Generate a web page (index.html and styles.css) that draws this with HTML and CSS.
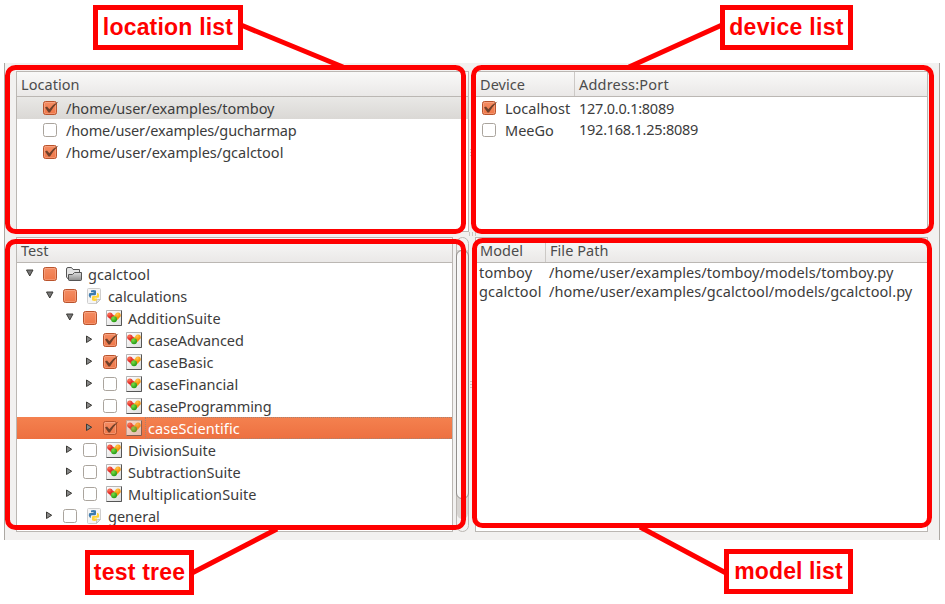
FILE: index.html
```
<!DOCTYPE html>
<html lang="en">
<head>
<meta charset="utf-8">
<title>Test runner</title>
<link rel="stylesheet" href="styles.css">
</head>
<body>
<svg class="defs" width="0" height="0">
  <defs>
    <linearGradient id="orange" x1="0" y1="0" x2="0" y2="1"><stop offset="0" stop-color="#f58d63"/><stop offset="1" stop-color="#ef7748"/></linearGradient>
    <linearGradient id="grey" x1="0" y1="0" x2="0" y2="1"><stop offset="0" stop-color="#dcdcdc"/><stop offset="1" stop-color="#8c8c8c"/></linearGradient>
    <linearGradient id="tile" x1="0" y1="0" x2="1" y2="1"><stop offset="0" stop-color="#fff"/><stop offset="1" stop-color="#dcdcdc"/></linearGradient>
    <radialGradient id="red" cx=".35" cy=".3" r=".7"><stop offset="0" stop-color="#ff7a5c"/><stop offset="1" stop-color="#dc1c1c"/></radialGradient>
    <radialGradient id="amber" cx=".35" cy=".3" r=".7"><stop offset="0" stop-color="#ffc84a"/><stop offset="1" stop-color="#f58c00"/></radialGradient>
    <radialGradient id="green" cx=".35" cy=".3" r=".7"><stop offset="0" stop-color="#7be04a"/><stop offset="1" stop-color="#239a12"/></radialGradient>
    <symbol id="off" viewBox="0 0 16 16"><rect x=".5" y="1.5" width="13" height="13" rx="2" fill="#fff" stroke="#aaa49d"/></symbol>
    <symbol id="mixed" viewBox="0 0 16 16"><rect x=".5" y="1.5" width="13" height="13" rx="2" fill="url(#orange)" stroke="#b9532c"/><rect x="1.5" y="2.5" width="11" height="11" rx="1" fill="none" stroke="#fff" stroke-opacity=".2"/></symbol>
    <symbol id="on" viewBox="0 0 16 16"><rect x=".5" y="1.5" width="13" height="13" rx="2" fill="url(#orange)" stroke="#b9532c"/><rect x="1.5" y="2.5" width="11" height="11" rx="1" fill="none" stroke="#fff" stroke-opacity=".2"/><path d="M2 7.500 4 6.500 6.300 9.300Q9.500 4.500 15.500 1.500 10.500 6.500 7 12.500H5.500Z" fill="#70402a"/></symbol>
    <symbol id="open" viewBox="0 0 10 10"><path d="M1.500 2H8L4.750 8Z" fill="#777" stroke="#3c3b37"/></symbol>
    <symbol id="shut" viewBox="0 0 10 10"><path d="M1.500 2V8.500L6.700 5.250Z" fill="#888" stroke="#3c3b37"/></symbol>
    <symbol id="folder" viewBox="0 0 16 16"><path d="M.5 11V3Q.5 1.500 2 1.500H5.500L7 3.500H13.500V6L15 14H3Z" fill="#e4e4e4" stroke="#555"/><path d="M3.500 14.500Q2.500 14.500 2.500 13.500V8.500H6.500L8.500 6.500H15.500V13.500Q15.500 14.500 14.500 14.500Z" fill="url(#grey)" stroke="#555"/></symbol>
    <symbol id="py" viewBox="0 0 16 16"><path d="M1.500 1.500Q1.500.5 2.500.5H13.500Q14.500.5 14.500 1.500V11L10.500 15.500H2.500Q1.500 15.500 1.500 14.500Z" fill="#f5f5f5" stroke="#cfcfcf"/><path d="M10.500 15.500V12.500Q10.500 11.500 11.500 11.500H14.500Z" fill="#e2e2e2" stroke="#c4c4c4"/><path d="M5 2.500Q7.500 1.300 10 2.500V6Q10 7.200 8.800 7.200H6Q4.800 7.200 4.800 8.400V9.700H4Q1.800 7.500 3.500 5H7.500V4.300H5Z" fill="#3d7bae"/><path d="M11 5H12Q14 7 12.500 9.800H8.500V10.400H11V12.300Q8.500 13.700 6 12.300V9.200Q6 8 7.200 8H9.800Q11 8 11 6.800Z" fill="#ffd43b"/></symbol>
    <symbol id="suite" viewBox="0 0 16 16"><path d="M.5.5H15.500V15.500H.5Z" fill="url(#tile)" stroke="#b5b5b5"/><path d="M.5 15.500H15.500V.5" fill="none" stroke="#555"/><circle cx="6" cy="7.300" r="2.700" fill="url(#red)"/><circle cx="10.200" cy="7.300" r="2.700" fill="url(#amber)"/><circle cx="3.900" cy="5.200" r="2.700" fill="url(#red)"/><circle cx="12" cy="5.200" r="2.700" fill="url(#amber)"/><circle cx="8" cy="9.300" r="3" fill="url(#green)"/></symbol>
  </defs>
</svg>

<main class="window">
  <section class="panel">
    <header class="head"><span class="th">Location</span></header>
    <div class="row loc-row current"><svg class="check"><use href="#on"/></svg><span class="path">/home/user/examples/tomboy</span></div>
    <div class="row loc-row"><svg class="check"><use href="#off"/></svg><span class="path tight">/home/user/examples/gucharmap</span></div>
    <div class="row loc-row"><svg class="check"><use href="#on"/></svg><span class="path">/home/user/examples/gcalctool</span></div>
  </section>

  <section class="panel">
    <header class="head"><span class="th device">Device</span><span class="th port">Address:Port</span></header>
    <div class="row dev-row"><svg class="check"><use href="#on"/></svg><span class="name">Localhost</span><span class="addr">127.0.0.1:8089</span></div>
    <div class="row dev-row second"><svg class="check"><use href="#off"/></svg><span class="name">MeeGo</span><span class="addr">192.168.1.25:8089</span></div>
  </section>

  <div class="scroller">
    <section class="panel tree">
      <header class="head"><span class="th">Test</span></header>
      <div class="row l0"><svg class="arrow"><use href="#open"/></svg><svg class="check"><use href="#mixed"/></svg><svg class="icon"><use href="#folder"/></svg><span class="loose">gcalctool</span></div>
      <div class="row l1"><svg class="arrow"><use href="#open"/></svg><svg class="check"><use href="#mixed"/></svg><svg class="icon"><use href="#py"/></svg><span class="tight">calculations</span></div>
      <div class="row l2"><svg class="arrow"><use href="#open"/></svg><svg class="check"><use href="#mixed"/></svg><svg class="icon"><use href="#suite"/></svg><span class="loose">AdditionSuite</span></div>
      <div class="row l3"><svg class="arrow"><use href="#shut"/></svg><svg class="check"><use href="#on"/></svg><svg class="icon"><use href="#suite"/></svg><span class="tight">caseAdvanced</span></div>
      <div class="row l3"><svg class="arrow"><use href="#shut"/></svg><svg class="check"><use href="#on"/></svg><svg class="icon"><use href="#suite"/></svg><span>caseBasic</span></div>
      <div class="row l3"><svg class="arrow"><use href="#shut"/></svg><svg class="check"><use href="#off"/></svg><svg class="icon"><use href="#suite"/></svg><span>caseFinancial</span></div>
      <div class="row l3"><svg class="arrow"><use href="#shut"/></svg><svg class="check"><use href="#off"/></svg><svg class="icon"><use href="#suite"/></svg><span class="tight">caseProgramming</span></div>
      <div class="row l3 selected"><svg class="arrow"><use href="#shut"/></svg><svg class="check"><use href="#on"/></svg><svg class="icon"><use href="#suite"/></svg><span class="loose focus">caseScientific</span></div>
      <div class="row l2"><svg class="arrow"><use href="#shut"/></svg><svg class="check"><use href="#off"/></svg><svg class="icon"><use href="#suite"/></svg><span>DivisionSuite</span></div>
      <div class="row l2"><svg class="arrow"><use href="#shut"/></svg><svg class="check"><use href="#off"/></svg><svg class="icon"><use href="#suite"/></svg><span>SubtractionSuite</span></div>
      <div class="row l2"><svg class="arrow"><use href="#shut"/></svg><svg class="check"><use href="#off"/></svg><svg class="icon"><use href="#suite"/></svg><span class="loose">MultiplicationSuite</span></div>
      <div class="row l1"><svg class="arrow"><use href="#shut"/></svg><svg class="check"><use href="#off"/></svg><svg class="icon"><use href="#py"/></svg><span>general</span></div>
    </section>
    <div class="bar"><div class="trough"><div class="thumb"></div></div></div>
  </div>

  <section class="panel">
    <header class="head"><span class="th model">Model</span><span class="th">File Path</span></header>
    <div class="row mod-row"><span class="mod">tomboy</span><span class="file">/home/user/examples/tomboy/models/tomboy.py</span></div>
    <div class="row mod-row"><span class="mod">gcalctool</span><span class="file">/home/user/examples/gcalctool/models/gcalctool.py</span></div>
  </section>
</main>

<svg class="marks" width="945" height="604" viewBox="0 0 945 604">
  <path d="M470 149.500h3M470 152.500h3M470 155.500h3M470 381.500h3M470 384.500h3M470 387.500h3M469.500 232v4M472.500 232v4M475.500 232v4" stroke="#c9c5c1" fill="none"/>
  <g fill="none" stroke="#f00" stroke-width="5">
    <rect x="7.500" y="67.500" width="456" height="164" rx="8"/>
    <rect x="473.500" y="67.500" width="458" height="164" rx="8"/>
    <rect x="7.500" y="241.500" width="456" height="286" rx="8"/>
    <rect x="474.500" y="240.500" width="455" height="285" rx="8"/>
    <path d="M241 25 343 67M722 25 629 67M192 573 277 529M726 573 640 527"/>
  </g>
</svg>
<div class="label location">location list</div>
<div class="label devices">device list</div>
<div class="label tests">test tree</div>
<div class="label models">model list</div>
</body>
</html>
```
FILE: styles.css
```
body {
  display: flow-root;
  position: relative;
  margin: 0;
  width: 945px;
  height: 604px;
  overflow: hidden;
  background: #fff;
  color: #3c3c3c;
  font: 14.5px/22px "Noto Sans", "Open Sans", sans-serif;
}
.defs { position: absolute; }
svg { display: block; flex: none; }
span { white-space: nowrap; }

.window {
  box-sizing: border-box;
  width: 936px;
  height: 477px;
  margin: 63px 0 0 4px;
  padding: 8px 11px;
  border: solid #aca8a3;
  border-width: 0 1px;
  background: #f2f1f0;
  display: grid;
  grid-template: 161px 295px / 453px 453px;
  gap: 5px 6px;
}
.panel {
  box-sizing: border-box;
  border: 1px solid #bbb7b3;
  background: #fff;
  overflow: hidden;
}
.scroller { display: flex; gap: 3px; }
.tree { width: 437px; }

.head {
  display: flex;
  box-sizing: border-box;
  height: 25px;
  border-bottom: 1px solid #bbb7b3;
  background: linear-gradient(#f9f9f8, #eae8e7);
  color: #4c4c4c;
  line-height: 24px;
}
.th { padding-left: 4px; letter-spacing: 0.05px; }
.th.device, .th.model { box-sizing: border-box; border-right: 1px solid #ccc9c6; }
.th.device { width: 99px; }
.th.model { width: 70px; }
.th.port { letter-spacing: 0.2px; }

.row { display: flex; height: 22px; align-items: center; }
.tight { letter-spacing: -0.1px; }
.loose { letter-spacing: 0.08px; }
.check { width: 16px; height: 16px; }
.loc-row { padding-left: 26px; }
.path { margin-left: 7px; }
.path.tight { letter-spacing: -0.14px; }
.current { background: linear-gradient(#e9e8e6, #dad8d5); }
.dev-row { padding-left: 6px; }
.name { width: 74px; margin-left: 7px; }
.addr { letter-spacing: -0.25px; }
.second .addr { margin-top: -2px; }

.arrow { width: 10px; height: 10px; margin-right: 8px; margin-top: -3px; }
.icon { width: 16px; height: 16px; margin: 0 6px 0 7px; }
.l0 { padding-left: 8px; }
.l1 { padding-left: 28px; }
.l2 { padding-left: 48px; }
.l3 { padding-left: 68px; }
.selected { background: linear-gradient(#f4814f, #ed7040); color: #fff; }
.selected .icon { opacity: .7; }
.focus {
  flex: 1;
  height: 20px;
  margin-left: -3px;
  padding-left: 2px;
  border: 1px dotted #a98271;
  border-right: 0;
  line-height: 20px;
}

.mod-row { height: 19px; padding-left: 3px; position: relative; top: -1px; }
.mod { width: 70px; letter-spacing: 0.15px; }
.file { letter-spacing: 0.08px; }

.bar {
  box-sizing: border-box;
  width: 13px;
  border: 1px solid #bbb7b3;
  border-radius: 7px;
  background: #f4f3f2;
  padding: 12px 0;
}
.trough { height: 269px; background: #d8d5d2; border-radius: 0 0 6px 6px; }
.thumb {
  box-sizing: border-box;
  height: 249px;
  margin: 0 -1px;
  border: 1px solid #918e8b;
  border-radius: 6px;
  background: linear-gradient(90deg, #fafafa, #e9e7e6);
}

.marks { position: absolute; left: 0; top: 0; }
.label {
  position: absolute;
  box-sizing: border-box;
  height: 45px;
  border: 5px solid #f00;
  background: #fff;
  color: #f00;
  font: bold 23px/35px "Liberation Sans", Arial, sans-serif;
  letter-spacing: 0.2px;
  text-align: center;
  white-space: nowrap;
}
.location { left: 93px; top: 5px; width: 150px; }
.devices { left: 720px; top: 5px; width: 133px; letter-spacing: 0.3px; }
.tests { left: 85px; top: 550px; width: 109px; }
.models { left: 724px; top: 549px; width: 129px; letter-spacing: 0.1px; }
```
